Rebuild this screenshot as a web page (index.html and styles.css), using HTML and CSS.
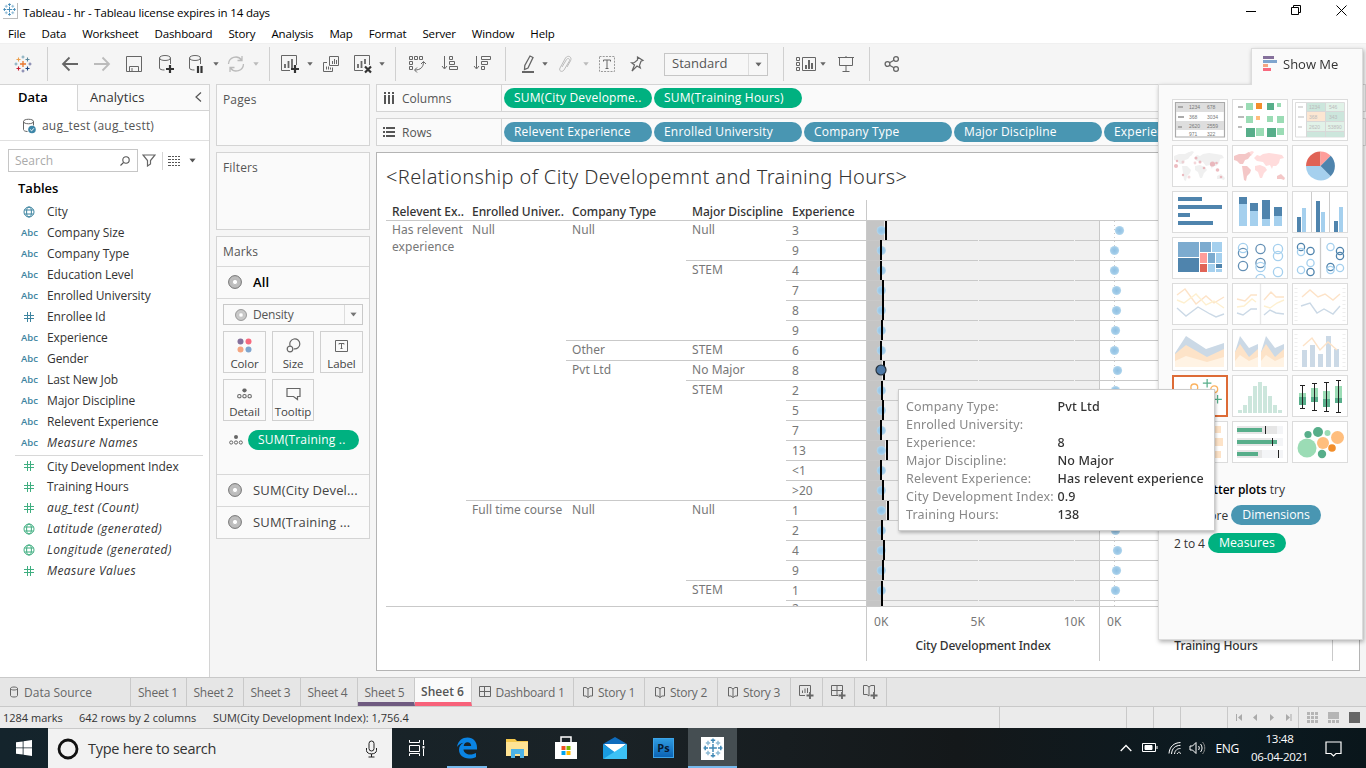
FILE: index.html
```html
<!DOCTYPE html>
<html lang="en">
<head>
<meta charset="utf-8">
<title>Tableau - hr</title>
<link rel="stylesheet" href="styles.css">
</head>
<body>
<svg class="defs" width="0" height="0" aria-hidden="true">
  <defs>
    <radialGradient id="glow"><stop offset="0" stop-color="#8fc0e2"/><stop offset=".65" stop-color="#9fcae8"/><stop offset="1" stop-color="#b4d8ee"/></radialGradient>
    <symbol id="dot" viewBox="0 0 10 10" overflow="visible"><circle cx="5" cy="5" r="4.6" fill="url(#glow)"/></symbol>
    <symbol id="caret" viewBox="0 0 6 4"><path d="M0.3 .3h5.4L3 3.7z" fill="currentColor"/></symbol>
    <symbol id="globe" viewBox="0 0 12 12"><g fill="none" stroke="currentColor"><circle cx="6" cy="6" r="5"/><ellipse cx="6" cy="6" rx="2.4" ry="5"/><path d="M1.6 4h8.8M1.6 8h8.8"/></g></symbol>
    <symbol id="hash" viewBox="0 0 12 12"><path d="M4.5 1v10M7.5 1v10M1 4.5h10M1 7.5h10" stroke="currentColor" fill="none"/></symbol>
    <symbol id="ring" viewBox="0 0 14 14"><circle cx="7" cy="7" r="4.6" fill="none" stroke="#bdbdbd" stroke-width="4"/><circle cx="7" cy="7" r="6.4" fill="none" stroke="#777"/><circle cx="7" cy="7" r="2.6" fill="#fff" stroke="#999" stroke-width=".6"/></symbol>
    <symbol id="detail" viewBox="0 0 14 10"><circle cx="7" cy="2" r="2" fill="#666"/><g fill="none" stroke="#666"><circle cx="2.2" cy="7.5" r="1.6"/><circle cx="7" cy="7.5" r="1.6"/><circle cx="11.8" cy="7.5" r="1.6"/></g></symbol>
    <symbol id="tlogo" viewBox="0 0 18 18"><g fill="none" stroke-width="1.1"><path d="M9 6v6M6 9h6" stroke="#e8762c" stroke-width="1.3"/><path d="M4.5 2.5v4M2.5 4.5h4" stroke="#eb9f4c"/><path d="M13.5 2.500v4M11.500 4.500h4" stroke="#59879b"/><path d="M4.500 11.500v4M2.500 13.500h4" stroke="#c72035"/><path d="M13.500 11.500v4M11.500 13.500h4" stroke="#1f447e"/><path d="M9 .5v3M7.500 2h3M.5 9h3M2 7.500v3" stroke="#7ba6b8"/><path d="M9 14.500v3M7.500 16h3M14.500 9h3M16 7.500v3" stroke="#7477a5"/></g></symbol>
    <symbol id="blogo" viewBox="0 0 18 18"><g fill="none" stroke="#3f88b5" stroke-width="1.3"><path d="M9 5.500v7M5.500 9h7M9 .5v4M7 2h4M9 13.500v4M7 16h4M.5 9h4M2 7v4M13.500 9h4M16 7v4"/><path d="M4.500 2.500v4M2.500 4.500h4M13.500 2.500v4M11.500 4.500h4M4.500 11.500v4M2.500 13.500h4M13.500 11.500v4M11.500 13.500h4" stroke="#8bb9d4"/></g></symbol>
    <symbol id="book" viewBox="0 0 12 12"><path d="M6 3v8.500M6 3L4 1.500H1.500v8.500H4L6 11.500 8 10h2.500V1.500H8z" fill="none" stroke="currentColor"/></symbol>
    <symbol id="dash" viewBox="0 0 12 12"><path d="M.5 .5h11v10H.5zM5.500 .5v10M.5 5.500h11" fill="none" stroke="currentColor"/></symbol>
  </defs>
</svg>

<header class="titlebar">
  <span class="appicon"><svg width="13" height="13"><use href="#blogo"/></svg></span>
  <span class="apptitle">Tableau - hr - Tableau license expires in 14 days</span>
  <svg class="winctl" width="110" height="24" fill="none" stroke="#000"><path d="M4 11.500h10M49.500 7.500h7v7h-7zM51.500 7v-1.500h7v7H57M94.500 5.500l10 10M104.500 5.500l-10 10"/></svg>
</header>
<nav class="menubar"><span>File</span><span>Data</span><span>Worksheet</span><span>Dashboard</span><span>Story</span><span>Analysis</span><span>Map</span><span>Format</span><span>Server</span><span>Window</span><span>Help</span></nav>

<div class="toolbar">
  <svg width="18" height="18"><use href="#tlogo"/></svg>
  <i class="sep"></i>
  <svg width="18" height="16" class="thick"><path d="M17 8H2M8.500 1.500L2 8l6.500 6.500"/></svg>
  <svg width="18" height="16" class="thick pale"><path d="M1 8h15M9.500 1.500L16 8l-6.500 6.500"/></svg>
  <svg width="18" height="18"><path d="M1.500 1.500h15v15h-15zM4.500 16.500v-5h9v5M7 13v3"/></svg>
  <svg width="18" height="20"><path d="M2.500 4v10c0 1.300 2 2 5 2M13.500 4v6M2.500 4c0-3.300 11-3.300 11 0s-11 3.300-11 0z"/><path class="dk" d="M13 11v8M9 15h8"/></svg>
  <svg width="18" height="20"><path d="M2.500 4v10c0 1.300 2 2 5 2M13.500 4v6M2.500 4c0-3.300 11-3.300 11 0s-11 3.300-11 0z"/><path class="dk" d="M11 12v7M14.500 12v7"/></svg>
  <svg width="6" height="4"><use href="#caret"/></svg>
  <svg width="20" height="18" class="pale"><path d="M2.500 9a7.200 7.200 0 0 1 13-4M17.500 9a7.200 7.200 0 0 1-13 4M16 1v4.500h-4.500M4 17v-4.500h4.500" stroke-width="1.300"/></svg>
  <svg width="6" height="4" class="pale"><use href="#caret"/></svg>
  <i class="sep"></i>
  <svg width="20" height="20"><path d="M10 16.500H1.500v-15h15V11"/><path d="M5 14v-4M8.500 14V7M12 14V5" stroke-width="1.800"/><path class="dk" d="M15 11v8M11 15h8"/></svg>
  <svg width="6" height="4"><use href="#caret"/></svg>
  <svg width="18" height="18"><path d="M7.500 1.500h9v9h-9zM5 7.500H1.500v9h9v-4M10.500 9V6M12.500 9V4M14.500 9V5M4.500 14.500v-3M6.500 14.500v-3M8.500 14.500v-2"/></svg>
  <svg width="20" height="20"><path d="M10 16.500H1.500v-15h15V11"/><path d="M5 14v-4M8.500 14V7M12 10V5" stroke-width="1.800"/><path class="dk" d="M12 12.500l6 6M18 12.500l-6 6"/></svg>
  <svg width="6" height="4"><use href="#caret"/></svg>
  <i class="sep"></i>
  <svg width="18" height="18"><path d="M1.500 1.500h3v3h-3zM6.500 1.500h3v3h-3zM11.500 1.500h3v3h-3zM1.500 6.500h3v3h-3zM1.500 11.500h3v3h-3zM15.500 7c0 5-3 8-8.500 8M13 9l2.500-2.500L18 9M9 12.500L6.500 15 9 17.500"/></svg>
  <svg width="18" height="18"><path d="M3.500 1v12M1 11l2.500 3L6 11M8.500 1.500h3v3h-3zM8.500 6.500h5v3h-5zM8.500 11.500h8v3h-8z"/></svg>
  <svg width="18" height="18"><path d="M3.500 1v12M1 11l2.500 3L6 11M8.500 1.500h9v3h-9zM8.500 6.500h6v3h-6zM8.500 11.500h3v3h-3z"/></svg>
  <i class="sep"></i>
  <svg width="14" height="20"><path d="M9 2l3 1.500-5 10.500-3.500 1.500.3-4z" stroke-width="1.300"/><path d="M1 18h12" stroke-width="2"/></svg>
  <svg width="6" height="4"><use href="#caret"/></svg>
  <svg width="14" height="18" class="pale"><path d="M4 12l4.500-7.500c1.300-2 4-.5 2.800 1.600L6 15c-2 2.800-5.500 1-4-2L7.500 3c2.500-3.500 7-1 5 2.800L9 12"/></svg>
  <svg width="6" height="4" class="pale"><use href="#caret"/></svg>
  <svg width="18" height="18"><path d="M1.500 1.500h15v15h-15z" stroke-dasharray="2 1.200" stroke="#999"/><path d="M5.500 6.500v-1.500h7v1.500M9 5v8M7.500 13.500h3"/></svg>
  <svg width="16" height="18"><path d="M8.500 2l5.500 3.500-2 .8-1.500 4.200.8 2.500-3.300-2L3 16l2.500-6L2.500 7.800l3-.3 3-2.500z" stroke-width="1.200"/></svg>
  <div class="fit"><span>Standard</span><b><svg width="7" height="5" viewBox="0 0 6 4"><use href="#caret"/></svg></b></div>
  <i class="sep"></i>
  <svg width="20" height="18"><path d="M.5 2.500h3v3h-3zM.5 7.500h3v3h-3zM.5 12.500h3v3h-3zM6.500 2.500h13v13h-13z"/><path d="M10 14v-4M13 14V5M16 14V8" stroke-width="2"/></svg>
  <svg width="6" height="4"><use href="#caret"/></svg>
  <svg width="18" height="18"><path d="M1 2.500h16M2.500 3v7.500h13V3M9 1v1M9 10.500v5.500M5.500 16.500h7"/></svg>
  <i class="sep"></i>
  <svg width="16" height="18"><g stroke-width="1.300"><circle cx="3.500" cy="9" r="2.400"/><circle cx="12" cy="4" r="2.400"/><circle cx="12" cy="14" r="2.400"/><path d="M5.500 7.800l4.500-2.600M5.500 10.200l4.500 2.600"/></g></svg>
</div>

<main class="work">
  <aside class="datapane">
    <div class="dtabs"><span class="on">Data</span><span class="off">Analytics<svg width="7" height="10" fill="none" stroke="#555" stroke-width="1.200"><path d="M6 .5L1 5l5 4.500"/></svg></span></div>
    <div class="source"><svg width="14" height="16" fill="none" stroke="#666"><path d="M1.500 3.500v8c0 1 1.500 2 4 2M11.500 3.500v4M1.500 3.500c0-3 10-3 10 0s-10 3-10 0z"/><circle cx="10" cy="11.500" r="3.800" fill="#3d86a8" stroke="none"/><path d="M8.200 11.500l1.400 1.400 2.300-2.600" stroke="#fff"/></svg><span>aug_test (aug_testt)</span></div>
    <div class="find">
      <div class="search"><span>Search</span><svg width="10" height="10" fill="none" stroke="#555" stroke-width="1.100"><circle cx="6" cy="4" r="3.200"/><path d="M3.500 6.500L.5 9.500"/></svg></div>
      <svg width="14" height="13" fill="none" stroke="#666" stroke-width="1.200"><path d="M1 1h12L8.500 6.500V10l-3 2V6.500z"/></svg>
      <i></i>
      <svg width="12" height="10" stroke="#555" fill="none"><path d="M0 .5h12M0 3.500h12M0 6.500h12M0 9.500h12" stroke-dasharray="3 1 2 1 2 1 2"/></svg>
      <svg width="7" height="5" viewBox="0 0 6 4" color="#555"><use href="#caret"/></svg>
    </div>
    <h2>Tables</h2>
    <ul class="fields dim">
      <li><svg><use href="#globe"/></svg>City</li>
      <li><b>Abc</b>Company Size</li>
      <li><b>Abc</b>Company Type</li>
      <li><b>Abc</b>Education Level</li>
      <li><b>Abc</b>Enrolled University</li>
      <li><svg><use href="#hash"/></svg>Enrollee Id</li>
      <li><b>Abc</b>Experience</li>
      <li><b>Abc</b>Gender</li>
      <li><b>Abc</b>Last New Job</li>
      <li><b>Abc</b>Major Discipline</li>
      <li><b>Abc</b>Relevent Experience</li>
      <li><b>Abc</b><em>Measure Names</em></li>
    </ul>
    <ul class="fields mea">
      <li><svg><use href="#hash"/></svg>City Development Index</li>
      <li><svg><use href="#hash"/></svg>Training Hours</li>
      <li><svg><use href="#hash"/></svg><em>aug_test (Count)</em></li>
      <li><svg><use href="#globe"/></svg><em>Latitude (generated)</em></li>
      <li><svg><use href="#globe"/></svg><em>Longitude (generated)</em></li>
      <li><svg><use href="#hash"/></svg><em>Measure Values</em></li>
    </ul>
  </aside>

  <section class="cards">
    <div class="card pages">Pages</div>
    <div class="card filters">Filters</div>
    <div class="card marks">
      <div class="mhead">Marks</div>
      <div class="mrow all"><svg width="14" height="14"><use href="#ring"/></svg><b>All</b></div>
      <div class="mbody">
        <div class="mtype"><svg width="12" height="12" viewBox="0 0 14 14"><use href="#ring"/></svg><span>Density</span><b><svg width="7" height="5" viewBox="0 0 6 4"><use href="#caret"/></svg></b></div>
        <div class="mbtns">
          <div><svg width="15" height="15"><circle cx="3.500" cy="3.500" r="3" fill="#85709b"/><circle cx="11.500" cy="3.500" r="3" fill="#f8697e"/><circle cx="3.500" cy="11.500" r="3" fill="#f4a581"/><circle cx="11.500" cy="11.500" r="3" fill="#7fa5ce"/></svg>Color</div>
          <div><svg width="15" height="15" fill="none" stroke="#666" stroke-width="1.200"><path d="M4.200 7.800a5 5 0 1 1 3.600 3"/><circle cx="4" cy="11" r="2.800"/></svg>Size</div>
          <div><svg width="15" height="15" fill="none" stroke="#666"><path d="M1.500 2.500h12v11h-12zM5 6.500v-1h5v1M7.500 5.500v5M6.500 10.500h2"/></svg>Label</div>
          <div><svg width="15" height="15" viewBox="0 0 14 10"><use href="#detail"/></svg>Detail</div>
          <div><svg width="15" height="15" fill="none" stroke="#666" stroke-width="1.200"><path d="M1 2.500h13v8h-2.500v3l-4-3H1z"/></svg>Tooltip</div>
        </div>
        <div class="mpill"><svg width="14" height="10"><use href="#detail"/></svg><span class="pill g">SUM(Training ..</span></div>
      </div>
      <div class="mrow"><svg width="14" height="14"><use href="#ring"/></svg>SUM(City Devel...</div>
      <div class="mrow"><svg width="14" height="14"><use href="#ring"/></svg>SUM(Training ...</div>
    </div>
  </section>

  <section class="canvas">
    <div class="shelf"><div class="sname"><svg width="12" height="12" stroke="#555" stroke-width="2" fill="none"><path d="M2 0v2M6 0v2M10 0v2M2 3v9M6 3v9M10 3v9"/></svg>Columns</div><div class="pills"><span class="pill g">SUM(City Developme..</span><span class="pill g">SUM(Training Hours)</span></div></div>
    <div class="shelf"><div class="sname"><svg width="12" height="12" stroke="#555" stroke-width="2" fill="none"><path d="M0 2h2M0 6h2M0 10h2M3 2h9M3 6h9M3 10h9"/></svg>Rows</div><div class="pills"><span class="pill">Relevent Experience</span><span class="pill">Enrolled University</span><span class="pill">Company Type</span><span class="pill">Major Discipline</span><span class="pill">Experience</span></div></div>
    <div class="viz">
      <h1>&lt;Relationship of City Developemnt and Training Hours&gt;</h1>
      <div class="thead"><span>Relevent Ex..</span><span>Enrolled Univer..</span><span>Company Type</span><span>Major Discipline</span><span>Experience</span><span class="vline"></span></div>
      <div class="tbody">
        <div class="cross">
          <span class="c1 s20">Has relevent<br>experience</span>
          <span class="c2 s14">Null</span>
          <span class="c3 s6">Null</span>
          <span class="c4 s2">Null</span><span class="c5">3</span><span class="c5">9</span>
          <span class="c4 s4">STEM</span><span class="c5">4</span><span class="c5">7</span><span class="c5">8</span><span class="c5">9</span>
          <span class="c3">Other</span><span class="c4">STEM</span><span class="c5">6</span>
          <span class="c3 s7">Pvt Ltd</span><span class="c4">No Major</span><span class="c5">8</span>
          <span class="c4 s6">STEM</span><span class="c5">2</span><span class="c5">5</span><span class="c5">7</span><span class="c5">13</span><span class="c5">&lt;1</span><span class="c5">&gt;20</span>
          <span class="c2 s6">Full time course</span><span class="c3 s6">Null</span><span class="c4 s4">Null</span><span class="c5">1</span><span class="c5">2</span><span class="c5">4</span><span class="c5">9</span>
          <span class="c4 s2">STEM</span><span class="c5">1</span><span class="c5 last">2</span>
        </div>
        <svg class="plot" width="467" height="387">
          <path fill="#f0f0f0" d="M0 0h233v387H0z"/>
          <path fill="#c5c5c5" d="M0 0h18v20h-4v40h2v40h-1v20h-1v20h2v20h-1v20h1v20h-2v20h5v20h-5v20h2v20h4v20h-5v20h2v20h-1v20h-1v27H0z"/>
          <path stroke="#c9c9c9" stroke-dasharray="1 3" d="M248.500 1v386"/>
          <g>
            <use href="#dot" x="10.300" y="5.500" width="10" height="10"/><use href="#dot" x="10.300" y="25.500" width="10" height="10"/><use href="#dot" x="10.300" y="45.500" width="10" height="10"/><use href="#dot" x="10.300" y="65.500" width="10" height="10"/><use href="#dot" x="10.300" y="85.500" width="10" height="10"/><use href="#dot" x="10.300" y="105.500" width="10" height="10"/><use href="#dot" x="10.300" y="125.500" width="10" height="10"/><use href="#dot" x="10.300" y="165.500" width="10" height="10"/><use href="#dot" x="10.300" y="185.500" width="10" height="10"/><use href="#dot" x="10.300" y="205.500" width="10" height="10"/><use href="#dot" x="10.300" y="225.500" width="10" height="10"/><use href="#dot" x="10.300" y="245.500" width="10" height="10"/><use href="#dot" x="10.300" y="265.500" width="10" height="10"/><use href="#dot" x="10.300" y="285.500" width="10" height="10"/><use href="#dot" x="10.300" y="305.500" width="10" height="10"/><use href="#dot" x="10.300" y="325.500" width="10" height="10"/><use href="#dot" x="10.300" y="345.500" width="10" height="10"/><use href="#dot" x="10.300" y="365.500" width="10" height="10"/>
            <use href="#dot" x="248.500" y="5.500" width="10" height="10"/><use href="#dot" x="243.500" y="25.500" width="10" height="10"/><use href="#dot" x="243.500" y="45.500" width="10" height="10"/><use href="#dot" x="245.500" y="65.500" width="10" height="10"/><use href="#dot" x="245.500" y="85.500" width="10" height="10"/><use href="#dot" x="244.500" y="105.500" width="10" height="10"/><use href="#dot" x="243.500" y="125.500" width="10" height="10"/><use href="#dot" x="246.500" y="145.500" width="10" height="10"/><use href="#dot" x="244.500" y="165.500" width="10" height="10"/><use href="#dot" x="244.500" y="305.500" width="10" height="10"/><use href="#dot" x="246.500" y="325.500" width="10" height="10"/><use href="#dot" x="245.500" y="345.500" width="10" height="10"/><use href="#dot" x="244.500" y="365.500" width="10" height="10"/>
          </g>
          <path stroke="#c9c9c9" d="M0 .5h467M0 20.500h467M0 40.500h467M0 60.500h467M0 80.500h467M0 100.500h467M0 120.500h467M0 140.500h467M0 160.500h467M0 180.500h467M0 200.500h467M0 220.500h467M0 240.500h467M0 260.500h467M0 280.500h467M0 300.500h467M0 320.500h467M0 340.500h467M0 360.500h467M0 380.500h467"/>
          <path stroke="#f4f4f4" stroke-dasharray="1 19" d="M112.500 20v367M208.500 20v367"/>
          <path stroke="#000" stroke-width="2" d="M20 1v19M15 20v20M15 41v19M17 60v40M16 100v20M15 121v19M18 141v19M16 161v19M17 180v20M15 200v20M21 220v20M15 240v20M17 260v20M22 281v19M16 300v20M18 320v20M17 340v20M16 361v25"/>
          <circle cx="15" cy="150" r="5" fill="#4e79a7" stroke="#26333f" stroke-width="1.200"/>
          <path stroke="#c9c9c9" d="M.5 0v387M233.500 0v387M466.500 0v387"/>
        </svg>
      </div>
      <div class="axes">
        <div class="ax"><div class="ticks"><span>0K</span><span>5K</span><span>10K</span></div><p>City Development Index</p></div>
        <div class="ax"><div class="ticks"><span>0K</span></div><p>Training Hours</p></div>
      </div>
    </div>
  </section>
</main>

<div class="showme">
  <div class="smtab"><svg width="14" height="15"><path fill="#85709b" d="M0 0h11v3H0z"/><path fill="#7fa5ce" d="M0 4h14v3H0z"/><path fill="#f4a581" d="M0 8h5v3H0z"/><path fill="#f8697e" d="M0 12h8v3H0z"/></svg>Show Me</div>
  <div class="smbody">
    <div class="thumbs">
      <svg viewBox="0 0 54 40"><path fill="#fff" stroke="#aaa" stroke-width="1.200" d="M2.500 2.500h49v34.500h-49z"/><path fill="#dedede" d="M3 3h48v9H3zM3 21h48v9H3z"/><path stroke="#aaa" stroke-width="2" d="M5 7h5M5 17h6M5 27h4"/><g class="tiny"><text x="16" y="9">1234</text><text x="34" y="9">678</text><text x="16" y="18.500">368</text><text x="34" y="18.500">3034</text><text x="16" y="27.500">2620</text><text x="34" y="27.500">2559</text><text x="16" y="35.500">971</text><text x="34" y="35.500">322</text></g></svg>
      <svg viewBox="0 0 54 40"><path stroke="#bbb" stroke-width="2" d="M5 7h5M5 17h6M5 27h4"/><path fill="#9bdcb5" d="M13 3h7v7h-7zM44 3h4v4h-4zM13 16h7v7h-7zM34 16h6v6h-6zM44 16h7v7h-7zM23 28h8v8h-8zM44 28h7v7h-7z"/><path fill="#57ae8a" d="M34 3h7v7h-7zM13 28h9v9h-9zM34 28h9v9h-9z"/><path fill="#f28e2b" d="M23 3h6v6h-6z"/><path fill="#ffbe7d" d="M23 16h4v4h-4z"/></svg>
      <svg viewBox="0 0 54 40"><path fill="#fff" stroke="#ddd" d="M2.500 2.500h49v34.500h-49z"/><path fill="#cce6dc" d="M14 3h18v8H14zM33 12h18v9H33zM14 32h18v5H14zM33 32h18v5H33z"/><path fill="#e1f2e8" d="M33 3h18v8H33zM14 22h18v9H14zM33 22h18v9H33z"/><path fill="#fce6d2" d="M14 12h18v9H14z"/><path stroke="#d8d8d8" d="M13.500 3v34M32.500 3v34M14 11.500h37M14 21.500h37M14 31.500h37"/><path stroke="#ddd" stroke-width="2" d="M5 7h5M5 17h6M5 27h4"/><g class="tiny faint"><text x="16" y="9">1234</text><text x="36" y="9">546</text><text x="16" y="18.500">368</text><text x="36" y="18.500">343</text><text x="16" y="28.500">2620</text><text x="35" y="28.500">53890</text></g></svg>
      <svg viewBox="0 0 54 40"><path fill="#f0f0f0" d="M1 10l5-2 6 0 4-2 2 3-3 4-3 1-2 4-3 0-3-3-3-1zM14 7l5-2 2 1-3 4zM9 20l5 0 4 4-1 3-3 3-1 5-2-1-1-7zM21 12l3-3 3 1 3-2 6-1 7 1 6 1 2 3-4 1-1 4-3 3-3 0-1 3-2-4-4 1-3-4-6-1zM22 20l5-1 5 2 2 3-3 3-2 5-2 0-2-6-3-2zM44 30l4-2 4 4-1 2-3-1-4 0z"/><g fill="#e7a6ad" opacity=".75"><circle cx="3" cy="20" r="2"/><circle cx="4" cy="15" r="1.200"/><circle cx="10" cy="16" r="1.500" opacity=".6"/><circle cx="10" cy="29" r="1.200"/><circle cx="16" cy="31" r="1.500" opacity=".6"/><circle cx="22" cy="17" r="1.400" opacity=".6"/><circle cx="23" cy="12" r="1.500"/><circle cx="27" cy="16" r="1.500"/><circle cx="31" cy="22" r="1.300"/><circle cx="39.500" cy="18" r="2.600"/><circle cx="43.500" cy="17" r="1.300"/><circle cx="44.500" cy="24" r="1.800"/><circle cx="48" cy="31" r="1.300"/></g></svg>
      <svg viewBox="0 0 54 40"><path fill="#ffdcdc" d="M14 7l5-2 2 1-3 4zM21 12l3-3 3 1 3-2 6-1 7 1 6 1 2 3-4 1-1 4-3 3-3 0-1 3-2-4-4 1-3-4-6-1zM22 20l5-1 5 2 2 3-3 3-2 5-2 0-2-6-3-2z"/><path fill="#f4c7c7" d="M1 10l5-2 6 0 4-2 2 3-3 4-3 1-2 4-3 0-3-3-3-1zM9 20l5 0 4 4-1 3-3 3-1 5-2-1-1-7zM44 30l4-2 4 4-1 2-3-1-4 0z"/></svg>
      <svg viewBox="0 0 54 40"><path fill="#a5d0ee" d="M27.500 20H13a14.500 14.500 0 0 0 24.700 10.200z"/><path fill="#e06356" d="M27.500 20V5.500A14.500 14.500 0 0 0 13 20z"/><path fill="#ff9d9a" d="M27.500 20V5.500A14.500 14.500 0 0 1 37.700 9.800z"/><path fill="#4f84ad" d="M27.500 20L37.700 9.800a14.500 14.500 0 0 1 0 20.400z"/></svg>
      <svg viewBox="0 0 54 40"><path fill="#4f84ad" d="M5 5h24v4H5zM5 13h44v4H5zM5 21h12v4H5zM5 29h35v4H5z"/></svg>
      <svg viewBox="0 0 54 40"><path fill="#a5d0ee" d="M6 12h8v22H6zM17 19h8v15h-8zM29 27h8v7h-8zM41 24h8v10h-8z"/><path fill="#4f84ad" d="M6 5h8v7H6zM17 11h8v8h-8zM29 8h8v19h-8zM41 15h8v9h-8z"/></svg>
      <svg viewBox="0 0 54 40"><path stroke="#ccc" d="M18.500 0v40M36.500 0v40"/><path fill="#4f84ad" d="M4 25h4v15H4zM23 9h4v31h-4zM41 29h4v11h-4z"/><path fill="#a5d0ee" d="M9 16h4v24H9zM28 20h4v20h-4zM46 15h4v25h-4z"/></svg>
      <svg viewBox="0 0 54 40"><path fill="#7cabcf" d="M5 4h21v15H5zM27 4h11v10H27zM35 15h7v10h-7z"/><path fill="#4f84ad" d="M5 20h21v14H5zM43 26h6v4h-6z"/><path fill="#a5d0ee" d="M39 4h10v10H39zM43 15h6v10h-6zM35 26h7v8h-7zM43 31h6v3h-6z"/><path fill="#ff9d9a" d="M27 15h7v10h-7z"/><path fill="#e06356" d="M27 26h7v8h-7z"/></svg>
      <svg viewBox="0 0 54 40" fill="none" stroke-width="1.300"><g stroke="#6490b5"><circle cx="10" cy="15" r="4.600"/><circle cx="10" cy="28" r="4.600"/><circle cx="27.500" cy="11" r="4.600"/><circle cx="27.500" cy="25" r="4.600"/></g><g stroke="#a5d0ee"><circle cx="10" cy="10" r="4.600"/><circle cx="45" cy="11" r="4.600"/><circle cx="45" cy="18" r="4.600"/><circle cx="27.500" cy="29" r="4.600"/><circle cx="45" cy="34" r="4.600"/><circle cx="27.500" cy="41" r="4.600"/></g></svg>
      <svg viewBox="0 0 54 40" fill="none" stroke-width="1.300"><path stroke="#ccc" d="M27.500 0v40"/><g stroke="#4f84ad"><circle cx="8" cy="9" r="3.600"/><circle cx="17.500" cy="13" r="3.600"/><circle cx="17.500" cy="34" r="3.600"/><circle cx="47" cy="13" r="3.600"/><circle cx="47" cy="18" r="3.600"/><circle cx="37.500" cy="29" r="3.600"/></g><g stroke="#a5d0ee"><circle cx="8" cy="14" r="3.600"/><circle cx="17.500" cy="25" r="3.600"/><circle cx="8" cy="32" r="3.600"/><circle cx="37.500" cy="9" r="3.600"/><circle cx="37.500" cy="32" r="3.600"/><circle cx="47" cy="30" r="3.600"/></g></svg>
      <svg viewBox="0 0 54 40" fill="none" stroke-width="1.400"><path stroke="#fde3c8" d="M4 11l8-6 11 15 10-8 8 7 10-6"/><path stroke="#fef0d0" d="M4 16l7 3 12-9 10 11 8-4 10 7"/><path stroke="#cbd9e6" d="M4 24l9 8 12-9 12 7 6 3 8-3"/></svg>
      <svg viewBox="0 0 54 40" fill="none" stroke-width="1.400"><path stroke="#e8e8e8" d="M27.500 0v40"/><path stroke="#fde3c8" d="M4 15l8 2 6-6h6M31 16l7-8 5 5h8"/><path stroke="#fef0d0" d="M4 23l7-1 8-7 4 3M31 22l6 2 7-5 7-3"/><path stroke="#cbd9e6" d="M4 29l6 2 8-6h6M31 31l6-5 6 3 8 1"/></svg>
      <svg viewBox="0 0 54 40" fill="none" stroke-width="1.400"><path stroke="#eee" stroke-width="3" stroke-dasharray="1 3" d="M3 4v34M51 4v34"/><path stroke="#fde3c8" d="M9 13l8-7 8 7 7-3 8 6 7-6"/><path stroke="#cbd9e6" d="M8 22l9-3 7 10 7-4 9 5 7-8"/></svg>
      <svg viewBox="0 0 54 40"><path fill="#cbd9e6" d="M2 23L13 6l20 13 18-6v24H2z"/><path fill="#fde3c8" d="M2 24l11-9 21 12 17-8v18H2z"/><path fill="#fff3e4" d="M2 31l11-5 21 6 17-5v10H2z"/></svg>
      <svg viewBox="0 0 54 40"><path fill="#cbd9e6" d="M2 22L7 6l9 12 9-4v23H2zM28 22l5-16 9 12 9-4v23H28z"/><path fill="#fde3c8" d="M2 22l5-8 9 13 9-8v18H2zM28 22l5-8 9 13 9-8v18H28z"/><path fill="#fff3e4" d="M2 31l5-6 9 6 9-4v10H2zM28 31l5-6 9 6 9-4v10H28z"/></svg>
      <svg viewBox="0 0 54 40" fill="none"><path stroke="#eee" stroke-width="3" stroke-dasharray="1 3" d="M3 4v34M51 4v34"/><path fill="#cbd9e6" d="M9 20h5v17H9zM17 15h5v22h-5zM25 24h5v13h-5zM33 6h5v31h-5zM41 19h5v18h-5z"/><path stroke="#fde3c8" stroke-width="1.400" d="M10 16l9-8 8 12 8-8 9 8"/></svg>
      <svg class="sel" viewBox="0 0 54 40" fill="none"><g stroke="#fbb25f" stroke-width="1.400"><circle cx="21" cy="11" r="3.600"/><circle cx="42" cy="13" r="3.600"/></g><path stroke="#57ae8a" stroke-width="1.300" d="M34.500 2v9M30 6.500h9M45.500 19v9M41 23.500h9"/></svg>
      <svg viewBox="0 0 54 40"><path fill="#cce6dc" d="M5 34h4v3H5zM10 29h4v8h-4zM15 20h4v17h-4zM20 10h4v27h-4zM25 6h4v31h-4zM30 10h4v27h-4zM35 20h4v17h-4zM40 29h4v8h-4zM45 34h4v3h-4z"/></svg>
      <svg viewBox="0 0 54 40"><path fill="#9bdcb5" d="M6 17h7v4H6zM18 12h7v9h-7zM30 15h7v8h-7zM42 10h7v12h-7z"/><path fill="#57ae8a" d="M6 21h7v8H6zM18 21h7v5h-7zM30 23h7v8h-7zM42 22h7v5h-7z"/><path stroke="#222" d="M9.500 9.500v23M7 9.500h5M7 32.500h5M21.500 7.500v27M19 7.500h5M19 34.500h5M33.500 6.500v29M31 6.500h5M31 35.500h5M45.500 4.500v32M43 4.500h5M43 36.500h5"/></svg>
      <svg viewBox="0 0 54 40"><path fill="#fde3c8" d="M20 4h28v7H20zM20 16h30v8H20zM20 29h28v7H20z"/></svg>
      <svg viewBox="0 0 54 40"><path fill="#f4f5f7" d="M4 4h46v8H4zM4 16h46v8H4zM4 28h46v8H4z"/><path fill="#e6e6e6" d="M4 4h40v8H4zM4 16h34v8H4zM4 28h25v8H4z"/><path fill="#57ae8a" d="M4 6h25v4H4zM4 18h40v4H4zM4 30h21v4H4z"/><path stroke="#222" d="M32.500 4v8M39.500 16v8M45.500 28v8"/></svg>
      <svg viewBox="0 0 54 40"><g fill="#57ae8a"><circle cx="15" cy="12.500" r="3.600"/><circle cx="25" cy="10" r="5"/><circle cx="29" cy="32" r="4.200"/></g><g fill="#9bdcb5"><circle cx="14" cy="26" r="9.500"/><circle cx="34.500" cy="11" r="3"/></g><g fill="#ffbe7d"><circle cx="30" cy="21" r="6"/><circle cx="44.500" cy="15.500" r="6.500"/></g><circle cx="39" cy="26" r="3.800" fill="#f28e2b"/></svg>
    </div>
    <p class="l1">For <b>scatter plots</b> try</p>
    <p class="l2">0 or more <span class="tag">Dimensions</span></p>
    <p class="l3">2 to 4 <span class="tag g">Measures</span></p>
  </div>
</div>

<div class="tooltip">
  <span>Company Type:</span><b>Pvt Ltd</b>
  <span>Enrolled University:</span><b></b>
  <span>Experience:</span><b>8</b>
  <span>Major Discipline:</span><b>No Major</b>
  <span>Relevent Experience:</span><b>Has relevent experience</b>
  <span>City Development Index:</span><b>0.9</b>
  <span>Training Hours:</span><b>138</b>
</div>

<div class="tabs">
  <div class="ds"><svg width="10" height="12" fill="none" stroke="#666"><path d="M1.500 2.500v7c0 2 7 2 7 0v-7c0-2-7-2-7 0s7 2 7 0"/></svg>Data Source</div>
  <div>Sheet 1</div><div class="w57">Sheet 2</div><div class="w57">Sheet 3</div><div class="w57">Sheet 4</div><div class="w57 purple">Sheet 5</div><div class="w57 cur">Sheet 6</div>
  <div class="w102"><svg width="12" height="12"><use href="#dash"/></svg>Dashboard 1</div>
  <div class="w71"><svg width="12" height="12"><use href="#book"/></svg>Story 1</div>
  <div class="w73"><svg width="12" height="12"><use href="#book"/></svg>Story 2</div>
  <div class="w73"><svg width="12" height="12"><use href="#book"/></svg>Story 3</div>
  <div class="w32"><svg width="16" height="16" fill="none" stroke="#666"><path d="M7 11.500H1.500v-10h11V8M4.500 9V6.500M7 9V4.500M9.500 9V4"/><path d="M12 8v7M8.500 11.500h7" stroke-width="1.800"/></svg></div>
  <div class="w32"><svg width="16" height="16" fill="none" stroke="#666"><path d="M8 11.500H1.500v-10h11V8M7 1.500v10M1.500 6.500h11"/><path d="M12 8v7M8.500 11.500h7" stroke-width="1.800"/></svg></div>
  <div class="w32"><svg width="16" height="16" fill="none" stroke="#666"><path d="M7 3v9L5 10.500H1.500v-9H5L7 3l2-1.500h3.500V8"/><path d="M12 8v7M8.500 11.500h7" stroke-width="1.800"/></svg></div>
</div>
<footer class="status">
  <span class="a">1284 marks</span><span class="b">642 rows by 2 columns</span><span class="c">SUM(City Development Index): 1,756.4</span>
  <i></i><i class="i2"></i><i class="i3"></i><i class="i4"></i>
  <svg width="71" height="21"><path d="M.5 0v21" stroke="#c9c9c9"/><g fill="#aaa"><path d="M9 7h1v7H9zM15 7v7l-4-3.500zM30 7v7l-4-3.500zM43 7v7l4-3.500zM59 7v7l4-3.500zM63.500 7h1v7h-1z"/></g></svg>
  <svg width="68" height="21"><path d="M.5 0v21" stroke="#c9c9c9"/><path fill="#b5b5b5" d="M9 5h3v3H9zM13 5h3v3h-3zM17 5h3v3h-3zM9 9h3v3H9zM13 9h3v3h-3zM17 9h3v3h-3zM9 13h3v3H9zM13 13h3v3h-3zM17 13h3v3h-3zM30 5h11v7H30zM30 13h3v3h-3zM34 13h3v3h-3zM38 13h3v3h-3z"/><path fill="#666" d="M51 5h11v11H51z"/></svg>
</footer>

<footer class="taskbar">
  <div class="start"><svg width="16" height="16" fill="#fff"><path d="M0 2.300l6.700-.9v6.100H0zM7.500 1.300L16 0v7.500H7.500zM0 8.300h6.700v6.300L0 13.700zM7.500 8.300H16V16l-8.500-1.200z"/></svg></div>
  <div class="tsearch"><svg width="22" height="22"><circle cx="11" cy="11" r="9" fill="none" stroke="#111" stroke-width="2.800"/></svg><span>Type here to search</span><svg width="13" height="18" fill="none" stroke="#222"><rect x="4" y="1" width="5" height="10" rx="2.500"/><path d="M1.500 8v2.500c0 4.500 10 4.500 10 0V8M6.500 14v3M3.500 17h6"/></svg></div>
  <div class="app"><svg width="18" height="16" fill="none" stroke="#fff"><path d="M1.500 0v2.500h10V0M1.500 5.500h10v6h-10zM1.500 16v-2.500h10V16M15.500 0v5M15.500 9v7"/><path d="M15.500 6v2.500" stroke-width="2"/></svg></div>
  <div class="app edge"><svg width="22" height="22"><path fill="#0a84e4" d="M1 10C2 3.500 6.500.5 11.500.5 17 .5 21 4.500 21 10.500v2H7.500c.3 3.500 3.500 5 6.500 5 2.500 0 4.500-.6 6-1.500v4c-2 1-4.500 1.500-7 1.500C7 21.500 3 18 3 12.800c0-3 1.500-5.500 4.500-7C4.500 6.300 2.500 8 1 10zM7.700 9h7.500c0-2.500-1.500-3.800-3.700-3.800S8 6.500 7.700 9z"/></svg></div>
  <div class="app"><svg width="22" height="20"><path fill="#f5c84c" d="M0 1h9l2 2h11v5H0z"/><path fill="#ffe394" d="M0 4h22v14H0z"/><path fill="#4db3e6" d="M5 11h13v9h-4v-4H9v4H5z"/></svg></div>
  <div class="app"><svg width="24" height="24"><path fill="none" stroke="#fff" stroke-width="1.500" d="M7 6V1h10v5"/><path fill="#fff" d="M1 6h22v17H1z"/><path fill="#f25022" d="M7.500 10h4v4h-4z"/><path fill="#7fba00" d="M12.500 10h4v4h-4z"/><path fill="#00a4ef" d="M7.500 15h4v4h-4z"/><path fill="#ffb900" d="M12.500 15h4v4h-4z"/></svg></div>
  <div class="app"><svg width="24" height="22"><path fill="#0f6cbd" d="M0 7l12-7 12 7v14H0z"/><path fill="#fff" d="M1 7h22L12 16z"/><path fill="#1a9be0" d="M0 7l13 9L0 22z"/><path fill="#3cc1f5" d="M24 7v15H0z"/></svg></div>
  <div class="app"><span class="ps">Ps</span></div>
  <div class="app tab"><span class="tb"><svg width="20" height="20" viewBox="0 0 18 18"><use href="#blogo"/></svg></span></div>
  <div class="tray">
    <svg width="12" height="8" fill="none" stroke="#fff" stroke-width="1.300"><path d="M.7 7L6 1.500 11.300 7"/></svg>
    <svg width="16" height="10" fill="none" stroke="#fff"><path d="M.5 .5h13v8H.5zM15 3v3"/><path fill="#fff" d="M3 2.500h7v4H3z"/></svg>
    <svg width="14" height="14" fill="none" stroke="#fff"><path d="M12.500 13C12 11 11 10 9 13M6.500 13c.5-4 3-5.500 6-5.500M3.500 13C4 7 7.500 4.500 12.500 4.300M1 12.500C1.500 5.500 6 1.800 12.500 1.500"/></svg>
    <svg class="vol" width="17" height="14" fill="none" stroke="#fff"><path d="M1 5h2.500L7 1.500v11L3.500 9H1zM9.500 5c1 1.200 1 2.800 0 4M11.500 3c2 2.500 2 5.500 0 8"/><path d="M13.500 1c3 3.500 3 8.500 0 12" stroke="#888"/></svg>
    <span class="eng">ENG</span>
    <span class="clock"><span>13:48</span><span>06-04-2021</span></span>
    <svg width="17" height="17" fill="none" stroke="#fff" stroke-width="1.200"><path d="M1 1h15v11.500h-5L8.500 15 6 12.500H1z"/></svg>
  </div>
</footer>
</body>
</html>
```
FILE: styles.css
```css
* { box-sizing: border-box; }
body { margin: 0; width: 1366px; height: 768px; overflow: hidden; position: relative; background: #f5f5f5; color: #333; font-family: "Open Sans", sans-serif; font-size: 12px; display: flex; flex-direction: column; }
h1, h2, p, ul { margin: 0; padding: 0; font-weight: 400; }
ul { list-style: none; }
.defs { position: absolute; }
svg { flex: none; }

.titlebar { height: 24px; background: #fff; display: flex; align-items: center; color: #000; padding-left: 3px; }
.appicon { width: 15px; height: 16px; border-right: 1px solid #bbb; border-bottom: 1px solid #bbb; display: flex; margin-top: -2px; }
.apptitle { margin-left: 5px; font-size: 11.500px; letter-spacing: -.16px; }
.winctl { margin-left: auto; margin-right: 14px; }
.menubar { height: 19px; background: #fff; color: #000; display: flex; align-items: center; padding-left: 8px; gap: 16px; font-size: 11.500px; letter-spacing: -.16px; }

.toolbar { height: 41px; background: #f5f5f5; border-top: 1px solid #f0f0f0; padding-left: 6px; display: grid; grid-template-columns: 34px 14px 32px 32px 32px 32px 28px 12px 28px 12px 14px 28px 12px 30px 34px 4px 22px 22px 44px 20px 26px 20px 14px 26px 16px 26px 34px 118px 22px 24px 10px 36px 10px 36px; align-items: center; justify-items: center; }
.toolbar svg { fill: none; stroke: #666; color: #666; }
.toolbar svg use { stroke: none; }
.toolbar .thick { stroke-width: 1.800; }
.toolbar .pale { stroke: #bbb; color: #bbb; }
.toolbar .dk { stroke: #333; stroke-width: 2.200; }
.toolbar .sep { width: 1px; height: 34px; background: #d0d0d0; }
.fit { justify-self: end; margin-right: 4px; width: 104px; height: 23px; border: 1px solid #c6c6c6; display: flex; align-items: center; font-size: 13px; color: #555; background: #f7f7f7; }
.fit span { flex: 1; padding: 0 0 2px 7px; }
.fit b { width: 19px; height: 100%; border-left: 1px solid #ddd; display: flex; align-items: center; justify-content: center; }

.work { height: 593px; display: flex; }
.datapane { width: 210px; background: #fff; border-right: 1px solid #d4d4d4; border-top: 1px solid #d4d4d4; }
.dtabs { display: flex; height: 26px; font-size: 13px; }
.dtabs .on { width: 77px; padding: 3px 0 0 18px; font-weight: 600; color: #000; font-size: 13px; }
.dtabs .off { flex: 1; border-left: 1px solid #d4d4d4; border-bottom: 1px solid #d4d4d4; background: #fafafa; padding: 3px 7px 0 12px; display: flex; justify-content: space-between; letter-spacing: .1px; }
.dtabs .off svg { margin-top: 4px; }
.source { height: 30px; border-bottom: 1px solid #e0e0e0; display: flex; align-items: center; padding-left: 22px; gap: 6px; color: #555; letter-spacing: .2px; }
.find { display: flex; align-items: center; padding: 8px 0 0 8px; height: 31px; }
.search { width: 130px; height: 23px; border: 1px solid #c6c6c6; display: flex; align-items: center; justify-content: space-between; padding: 0 7px 0 6px; color: #aaa; margin-right: 4px; }
.find i { width: 1px; height: 18px; background: #d4d4d4; margin: 0 5px 0 6px; }
.find svg:last-child { margin-left: 9px; }
.datapane h2 { font-size: 13px; font-weight: 600; color: #000; padding-left: 18px; line-height: 18px; margin: 7px 0 4px; }
.fields li { height: 21px; display: flex; align-items: center; color: #333; letter-spacing: -.08px; }
.fields li em { letter-spacing: .42px; }
.fields li svg { width: 12px; height: 12px; margin: 0 12px 0 23px; }
.fields li b { width: 26px; margin-left: 21px; font-size: 9.500px; font-weight: 600; letter-spacing: 0; }
.dim svg, .dim b { color: #3d84a0; }
.mea svg { color: #3fae80; }
.mea { border-top: 1px solid #d8d8d8; margin: 0 6px 0 15px; }
.mea li:first-child { height: 20px; }
.dim { height: 254px; }
.mea li svg { margin-left: 8px; }

.cards { width: 154px; margin-left: 6px; display: flex; flex-direction: column; gap: 6px; color: #555; }
.card { border: 1px solid #d4d4d4; background: #fafafa; padding: 6px; letter-spacing: .15px; }
.pages { height: 62px; } .filters { height: 78px; }
.marks { height: 303px; padding: 0; }
.mhead { height: 29px; padding: 6px; }
.mrow { height: 32px; border-top: 1px solid #d8d8d8; display: flex; align-items: center; padding: 0 0 1px 11px; gap: 11px; color: #444; font-size: 13px; }
.all { padding-bottom: 2px; }
.mrow b { color: #000; font-weight: 600; font-size: 13px; }
.mbody { height: 176px; border-top: 1px solid #d8d8d8; padding: 5px 6px 0; }
.mtype { height: 21px; border: 1px solid #c9c9c9; display: flex; align-items: center; padding-left: 11px; gap: 6px; letter-spacing: -.2px; }
.mtype span { flex: 1; } .mtype svg { opacity: .8; }
.mtype b { width: 18px; border-left: 1px solid #ddd; height: 100%; display: flex; align-items: center; justify-content: center; }
.mbtns { display: grid; grid-template-columns: 43px 42px 43px; column-gap: 6px; row-gap: 6px; margin-top: 6px; }
.mbtns div { height: 42px; border: 1px solid #d0d0d0; display: flex; flex-direction: column; align-items: center; padding-top: 6px; font-size: 11.500px; line-height: 15px; gap: 3px; color: #444; letter-spacing: -.1px; }
.mpill { display: flex; align-items: center; margin-top: 9px; padding-left: 6px; gap: 5px; }
.mpill .pill { width: 111px; }

.pill { width: 148px; height: 20px; border-radius: 10px; background: #4996b2; color: #fff; padding-left: 10px; line-height: 19px; font-size: 12px; font-weight: 500; letter-spacing: .2px; white-space: nowrap; flex: none; }
.g { background: #00b180 !important; }

.canvas { margin-left: 6px; flex: 1; display: flex; flex-direction: column; gap: 6px; min-width: 0; }
.shelf { height: 28px; border: 1px solid #d4d4d4; background: #fafafa; display: flex; }
.sname { width: 125px; border-right: 1px solid #d4d4d4; display: flex; align-items: center; padding-left: 6px; gap: 7px; color: #555; }
.pills { display: flex; gap: 2px; padding: 3px 0 0 2px; overflow: hidden; flex: 1; }
.viz { width: 984px; height: 519px; border: 1px solid #b4b4b4; background: #fff; padding-left: 9px; font-family: "Noto Sans", sans-serif; overflow: hidden; }
.viz h1 { font-size: 20px; font-weight: 300; line-height: 26px; margin-top: 11px; height: 36px; color: #333; letter-spacing: .38px; white-space: nowrap; }
.thead { display: grid; grid-template-columns: 80px 100px 120px 100px 80px 1px; height: 20px; font-weight: 500; line-height: 24px; color: #333; font-size: 12px; letter-spacing: -.05px; }
.thead span { padding-left: 6px; white-space: nowrap; }
.thead .vline { background: #c9c9c9; padding: 0; }
.tbody { display: flex; height: 386px; overflow: hidden; width: 947px; }
.cross { display: grid; grid-template-columns: 80px 100px 120px 100px 80px; grid-auto-rows: 20px; grid-auto-flow: row dense; width: 480px; color: #777; line-height: 17px; }
.cross span { border-top: 1px solid #c9c9c9; padding: 0 0 0 6px; white-space: nowrap; letter-spacing: .05px; }
.cross .c5 { padding-top: 1px; }
.cross .last { line-height: 13px; }
.c1 { grid-column: 1; } .c2 { grid-column: 2; } .c3 { grid-column: 3; } .c4 { grid-column: 4; } .c5 { grid-column: 5; }
.s2 { grid-row-end: span 2; } .s4 { grid-row-end: span 4; } .s6 { grid-row-end: span 6; } .s7 { grid-row-end: span 7; } .s14 { grid-row-end: span 14; } .s20 { grid-row-end: span 20; }
.axes { display: flex; width: 947px; height: 55px; padding-left: 480px; border-top: 1px solid #c9c9c9; color: #777; }
.ax { width: 233px; border-left: 1px solid #c9c9c9; }
.ax:last-child { width: 234px; border-right: 1px solid #c9c9c9; }
.ticks { display: flex; height: 30px; padding-top: 6px; margin-left: -34px; }
.ticks span { flex: none; width: 96.500px; text-align: center; }
.ax p { text-align: center; font-weight: 500; color: #333; line-height: 17px; letter-spacing: -.1px; }

.showme { position: absolute; left: 1158px; top: 48px; width: 205px; height: 592px; filter: drop-shadow(1px 2px 2px rgba(0,0,0,.3)); color: #333; }
.smtab { width: 112px; height: 37px; margin-left: 93px; background: #fafafa; border: 1px solid #dcdcdc; border-bottom: 0; display: flex; align-items: center; gap: 6px; padding: 0 0 7px 11px; font-size: 13px; position: relative; z-index: 1; }
.smbody { height: 556px; margin-top: -1px; background: #fafafa; border: 1px solid #dcdcdc; padding: 14px 0 0 13px; }
.thumbs { display: grid; grid-template-columns: repeat(3, 56px); gap: 4px; }
.thumbs svg { width: 56px; height: 42px; border: 1px solid #dcdcdc; background: #fff; }
.thumbs .sel { border: 2px solid #dd6b36; }
.tiny { font: 5px "Liberation Sans", sans-serif; fill: #777; } .faint { fill: #bbb; }
.smbody p { height: 20px; display: flex; align-items: center; white-space: pre; }
.smbody p b { color: #000; font-weight: 600; }
.smbody .l1 { margin-top: 16px; padding-left: 1px; } .smbody .l2 { margin-top: 6px; padding-left: 1px; } .smbody .l3 { margin-top: 8px; padding-left: 2px; letter-spacing: -.1px; }
.tag { background: #4996b2; color: #fff; border-radius: 10px; padding: 0 11px; height: 20px; line-height: 19px; font-size: 12.300px; letter-spacing: 0; }

.tooltip { position: absolute; left: 898px; top: 389px; width: 317px; height: 142px; background: #fff; border: 1px solid #ccc; box-shadow: 1px 2px 3px rgba(0,0,0,.25); padding: 8px 0 0 7px; display: grid; grid-template-columns: 152px 1fr; grid-auto-rows: 18px; align-content: start; font: 12.500px/18px "Noto Sans", sans-serif; white-space: nowrap; color: #888; letter-spacing: .18px; }
.tooltip b { color: #333; font-weight: 500; margin-left: -.5px; letter-spacing: .12px; }

.tabs { height: 30px; background: #e6e6e6; border-top: 1px solid #c9c9c9; border-bottom: 1px solid #c9c9c9; display: flex; color: #666; letter-spacing: -.25px; }
.tabs div { width: 56px; border-right: 1px solid #c9c9c9; display: flex; align-items: center; justify-content: center; gap: 4px; white-space: nowrap; padding-right: 1px; }
.tabs .ds { width: 131px; justify-content: flex-start; padding-left: 9px; gap: 5px; letter-spacing: 0; }
.tabs .w57 { width: 57px; padding-right: 3px; } .tabs .w102 { width: 102px; } .tabs .w71 { width: 71px; } .tabs .w73 { width: 73px; } .tabs .w32 { width: 32px; }
.tabs .purple { border-bottom: 4px solid #6f5a80; padding-top: 4px; }
.tabs .cur { background: #fafafa; border-bottom: 4px solid #f8627a; padding: 3px 1px 0 0; font-weight: 600; color: #555; letter-spacing: 0; }
.status { height: 21px; background: #ebebeb; display: flex; align-items: center; padding-left: 3px; font-size: 11px; color: #333; white-space: nowrap; }
.status span, .status i { flex: none; }
.status .a { width: 76px; } .status .b { width: 134px; } .status .c { width: 786px; }
.status i { width: 127px; height: 21px; border-left: 1px solid #c9c9c9; } .status .i2, .status .i3 { width: 27px; } .status .i4 { width: 47px; }

.taskbar { height: 40px; background: linear-gradient(90deg, #14242c, #1a2226 45%, #14181a 70%, #0b1a21 90%, #0a161b); display: flex; color: #fff; }
.start { width: 48px; display: flex; align-items: center; justify-content: center; }
.tsearch { width: 344px; background: #f2f2f2; border-top: 1px solid #c9c9c9; display: flex; align-items: center; color: #333; font-size: 14.500px; padding-left: 9px; }
.tsearch span { flex: 1; padding-left: 9px; letter-spacing: -.28px; } .tsearch svg:last-child { margin-right: 14px; }
.app { width: 49px; display: flex; align-items: center; justify-content: center; }
.edge, .tab { border-bottom: 2px solid #76b9ed; padding-top: 2px; }
.edge { margin: 0 5px 0 6px; width: 40px; }
.tab { background: #454e52; }
.ps { width: 21px; height: 20px; background: linear-gradient(#2f9be0, #0b63b5); border: 1px solid #3da4e8; color: #071a33; font-weight: 700; font-size: 11px; text-align: center; line-height: 18px; }
.tb { width: 23px; height: 23px; background: #fff; display: flex; align-items: center; justify-content: center; }
.tray { margin-left: auto; display: flex; align-items: center; padding-right: 24px; }
.tray svg { margin-right: 10px; }
.tray svg:nth-of-type(3) { margin-right: 7px; }
.tray .vol { margin-right: 10px; }
.tray > svg:last-child { margin: 2px 0 0 17px; }
.eng { font-size: 12px; margin: 0 12px 0 -1px; letter-spacing: -.3px; }
.clock { display: flex; flex-direction: column; align-items: center; line-height: 18px; font-size: 11.500px; letter-spacing: -.3px; }
```
